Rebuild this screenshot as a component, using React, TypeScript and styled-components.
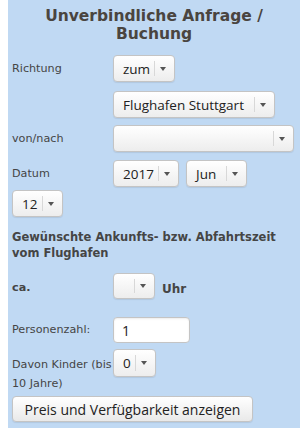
import React from 'react'
import styled, { createGlobalStyle } from 'styled-components'

const GlobalStyle = createGlobalStyle`
  html, body {
    margin: 0;
    padding: 0;
    background: #ffffff;
  }
  body {
    font-family: 'DejaVu Sans', Verdana, sans-serif;
  }
`

const Panel = styled.div`
  margin: 0 0 4px 8px;
  background: #c0d9f3;
  padding: 7px 4px 6px 4px;
  color: #454545;
`

const Title = styled.h2`
  margin: 0 0 12px 0;
  text-align: center;
  font-family: 'DejaVu Sans', Verdana, sans-serif;
  font-size: 15.5px;
  font-weight: bold;
  line-height: 18px;
  color: #4a4540;
`

const Row = styled.div<{ $gap?: number }>`
  display: flex;
  flex-wrap: wrap;
  align-items: flex-start;
  column-gap: 7px;
  row-gap: 3px;
  margin-bottom: ${(p) => (p.$gap !== undefined ? p.$gap : 8)}px;
`

const Label = styled.div<{ $bold?: boolean; $pt?: number }>`
  width: 101px;
  margin-right: -7px;
  padding-top: ${(p) => (p.$pt !== undefined ? p.$pt : 4)}px;
  font-size: 11.2px;
  line-height: 19px;
  white-space: nowrap;
  font-weight: ${(p) => (p.$bold ? 'bold' : 'normal')};
  color: #454545;
`

const Heading = styled.div`
  font-size: 11.5px;
  font-weight: bold;
  line-height: 16px;
  margin: 12px 0 12px 0;
  color: #454545;
`

const SelectBox = styled.div<{ $w: number; $h?: number }>`
  box-sizing: border-box;
  width: ${(p) => p.$w}px;
  height: ${(p) => p.$h || 27}px;
  display: flex;
  align-items: stretch;
  background: linear-gradient(#ffffff, #ededed);
  border: 1px solid #c4c4c4;
  border-radius: 4px;
  box-shadow: 0 1px 1px rgba(0, 0, 0, 0.08);
  font-family: 'Open Sans', 'Noto Sans', sans-serif;
  font-size: 13.5px;
  color: #222;
`

const SelectValue = styled.div`
  flex: 1;
  display: flex;
  align-items: center;
  padding-left: 9px;
  white-space: nowrap;
  overflow: hidden;
`

const Arrow = styled.div`
  width: 15px;
  margin: 5px 4px 5px 0;
  border-left: 1px solid #d8d8d8;
  display: flex;
  align-items: center;
  justify-content: center;

  &::after {
    content: '';
    border-left: 3px solid transparent;
    border-right: 3px solid transparent;
    border-top: 4px solid #555;
  }
`

const Unit = styled.div`
  font-size: 12px;
  font-weight: bold;
  line-height: 27px;
  padding-top: 3px;
  color: #454545;
`

const TextInput = styled.div`
  box-sizing: border-box;
  width: 77px;
  height: 26px;
  background: #ffffff;
  border: 1px solid #c4c4c4;
  border-radius: 4px;
  box-shadow: inset 0 1px 2px rgba(0, 0, 0, 0.08);
  padding-left: 8px;
  display: flex;
  align-items: center;
  font-family: 'Open Sans', 'Noto Sans', sans-serif;
  font-size: 14px;
  color: #222;
`

const SubmitButton = styled.button`
  display: block;
  box-sizing: border-box;
  width: 241px;
  height: 26px;
  margin-top: 3px;
  background: linear-gradient(#ffffff, #e9e9e9);
  border: 1px solid #c4c4c4;
  border-radius: 4px;
  box-shadow: 0 1px 1px rgba(0, 0, 0, 0.08);
  font-family: 'Open Sans', 'Noto Sans', sans-serif;
  font-size: 14px;
  color: #222;
  padding: 0;
`

const Select = (props: { value?: string; width: number; height?: number }) => (
  <SelectBox $w={props.width} $h={props.height}>
    <SelectValue>{props.value}</SelectValue>
    <Arrow />
  </SelectBox>
)

export default function App() {
  return (
    <>
      <GlobalStyle />
      <Panel>
        <Title>
          Unverbindliche Anfrage /
          <br />
          Buchung
        </Title>
        <Row $gap={9}>
          <Label>Richtung</Label>
          <Select value={'zum'} width={62} />
        </Row>
        <Row $gap={7}>
          <Label />
          <Select value={'Flughafen Stuttgart'} width={162} />
        </Row>
        <Row>
          <Label>von/nach</Label>
          <Select width={181} />
        </Row>
        <Row $gap={0}>
          <Label>Datum</Label>
          <Select value={'2017'} width={66} />
          <Select value={'Jun'} width={61} />
          <Select value={'12'} width={51} />
        </Row>
        <Heading>
          Gewünschte Ankunfts- bzw. Abfahrtszeit
          <br />
          vom Flughafen
        </Heading>
        <Row $gap={14}>
          <Label $bold $pt={5}>ca.</Label>
          <Select width={42} height={26} />
          <Unit>Uhr</Unit>
        </Row>
        <Row $gap={6}>
          <Label $pt={3}>Personenzahl:</Label>
          <TextInput>1</TextInput>
        </Row>
        <Row $gap={0}>
          <Label $pt={6}>
            Davon Kinder (bis
            <br />
            10 Jahre)
          </Label>
          <Select value={'0'} width={43} height={28} />
        </Row>
        <SubmitButton>Preis und Verfügbarkeit anzeigen</SubmitButton>
      </Panel>
    </>
  )
}
